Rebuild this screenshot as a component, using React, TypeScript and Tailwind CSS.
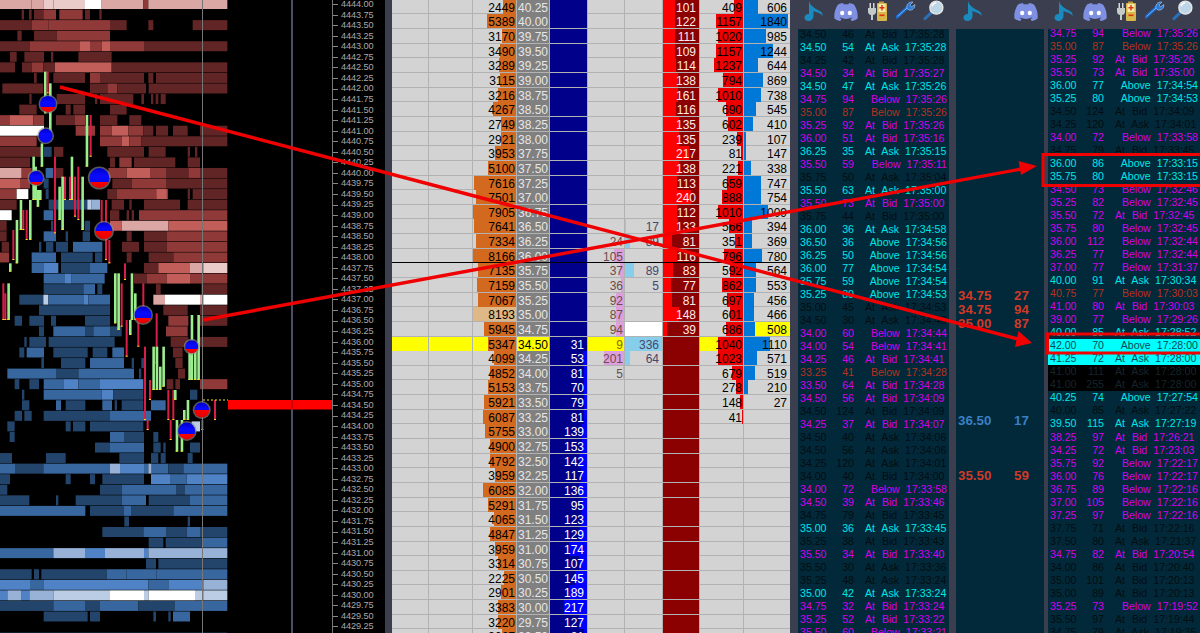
import React from "react";

const COLORS: Record<string, string> = {
  a: "#622525", b: "#8f3a38", c: "#c25e5a", d: "#dba7a5", e: "#ebcaca", w: "#ffffff",
  f: "#23456c", g: "#38669e", h: "#4f83c5", i: "#97b2d6", j: "#bacde5",
};

const HEAT: string[] = [
  "0-95d 95-130d 130-160e 160-255e 255-305w 305-430d 430-445b 445-682d",
  "65-72a 87-95a 102-130a 130-168b 178-248b 255-270a 298-305a",
  "0-95a 95-145b 145-330b 330-380a 445-460a 578-682a",
  "52-65a 102-170a 170-330b",
  "0-90a 90-150b 150-240b 240-270c 270-305b 305-330c 330-432b 432-682a",
  "30-50a 73-132a 153-160a 235-335a",
  "0-45a 66-95a 95-130b 130-165a 165-335c 335-682a",
  "102-110a 160-255a 270-300b 300-432a 445-460a 468-682a",
  "7-130a 270-322a 322-352b 352-438a 446-682a",
  "88-95a 170-255a 285-292a 300-400a 424-432a 453-460a 467-475a 482-497a",
  "58-110a 197-212a 220-255a 330-380a",
  "0-30b 30-100c 100-132b 168-225a 225-255b 300-352a 388-424a",
  "0-132w 227-285b 300-335b 335-385c 385-430b 430-460a 468-504a 519-563a 600-682a",
  "0-110b 300-365b 365-388c 388-424b 424-682a",
  "0-125a 162-190a 322-432a 446-497a 563-570a 585-592a",
  "0-90a 330-345a 358-395b 402-526a 563-600a",
  "0-65d 65-95b 162-190a 325-380b 380-450c 450-500b 500-565a 565-600b 600-682a",
  "0-60c 60-90b 337-395a 395-500b 500-682a",
  "0-50b 50-85w 322-350a 350-504b 470-500c 563-570a 578-682a",
  "0-50a 335-372a 388-395a 432-540a 563-682a",
  "0-35w 330-358a 380-387a 395-402a 417-682b",
  "0-20a 330-365c 365-465d 465-505d 505-570c 570-600c 600-682c",
  "0-20a 380-395a 432-500a 500-682b",
  "5-27a 366-417a 432-500a 500-682b",
  "0-27b 380-395a 446-520a 520-682b",
  "432-475a 475-570c 570-610d 610-682e",
  "402-440a 440-500b 500-570c 570-682b",
  "468-482a 604-682a",
  "460-495d 495-600w 600-610d 610-682w",
  "490-563a 600-682a",
  "505-565b 600-682a",
  "498-563b",
  "512-565a 600-682a",
  "519-548a",
  "526-548a",
  "534-555a",
  "500-520a 526-540a 600-682b",
  "", "", "", "", "", "", "",
  "", "", "", "", "", "", "", "", "", "", "", "", "", "", "", "", "",
];

const BLUE: Record<number, string> = {
  14: "132-155f", 16: "137-160g", 17: "131-146f", 18: "137-146f",
  19: "146-262f 262-275j 275-300i",
  20: "131-160g", 21: "153-160f 254-270f", 22: "131-168g 197-204f 248-270f",
  23: "117-124f 138-160f 168-204f 219-307g",
  24: "95-168g 183-278f 285-307f",
  25: "95-130g 130-175h 183-270f 270-322g",
  26: "131-195g 195-215h 215-314g",
  27: "131-250f 250-285g 292-307f",
  28: "58-130f 130-145j 145-250g 250-265h 265-330g",
  29: "117-330f",
  30: "44-66f 88-132f 153-168f 255-330f",
  31: "117-132f 160-255g 255-280f 280-330g 330-365f",
  32: "73-80f 88-138f 146-344f",
  33: "58-73f 80-132g 160-263f 278-322f 337-372g",
  34: "124-132f 183-256f 270-372g 395-402f 424-432f",
  35: "22-170g 170-235f 235-402g 417-424f",
  36: "44-58f 88-117f 131-190g 190-235h 235-300g 300-360h 360-430h",
  37: "66-73f 131-305g 305-340h 340-430f 570-592f",
  38: "66-88f 168-183g 197-256f 307-336g 344-351f 365-430f 453-497g",
  39: "44-66f 73-95f 131-330f 330-453g",
  40: "22-44f 197-212f 219-256f 270-330f 330-430f 575-600j",
  41: "29-44f 330-372g 372-432f 460-475f",
  42: "285-330f 330-432g 460-482f 490-497f 570-600f",
  43: "0-36f 138-197f 358-432f 453-475f 482-497f 563-578f",
  44: "0-45g 45-130f 130-330g 330-360i 360-432h 432-445g 445-455i 455-505g 505-550f 550-682g",
  45: "0-30f 197-212f 270-285f 307-432f 453-510h 510-560g 560-682h",
  46: "0-22f 300-365f 365-530g 530-555f 555-682g",
  47: "0-88f 168-175f 227-365f 365-438g 446-570f 570-682g",
  48: "0-256g 270-372f 372-395g 395-520f 520-682g",
  49: "373-387f 563-570f",
  50: "307-430f 430-500g 500-560f 560-600g 600-682f",
  51: "446-490f 497-605f 605-682g",
  52: "0-160g 160-255i 255-315h 315-432i 432-445h 445-570i 570-682i",
  53: "438-468f 475-682f",
  54: "0-95f 102-117f 124-320f 320-380g 380-470g 470-682g",
  55: "0-90h 90-130g 130-445h 445-505g 505-610h 610-682i",
  56: "0-22h 22-65i 65-88h 88-160i 160-330j 330-432w 432-446j 446-585w 585-610j 610-682j",
  57: "0-160f 160-255g 255-300f 300-415g 415-525f 525-682g",
  58: "131-263f 270-300f 460-468f 505-512f 519-570g",
  60: "0-682f",
};

const G = "#9ced8e", R = "#d81e46";
const CANDLES: [number, number, number, string][] = [
  [135, 215, 340, G], [150, 250, 400, G], [143, 215, 280, R], [125, 430, 500, G], [100, 470, 600, G], [106, 500, 600, G],
  [260, 345, 500, G], [272, 345, 470, R], [215, 470, 600, G], [187, 530, 690, G], [165, 470, 700, R], [178, 560, 660, G],
  [195, 530, 600, R], [210, 530, 600, R], [225, 530, 650, R], [247, 530, 690, G], [235, 500, 660, R],
  [62, 600, 690, G], [70, 630, 690, R], [50, 660, 790, G], [40, 690, 780, R], [30, 790, 815, G], [25, 850, 960, G],
  [10, 850, 960, R], [16, 880, 960, R], [80, 630, 720, R], [90, 600, 720, G], [113, 570, 620, G], [120, 570, 600, G], [305, 600, 700, R],
  [318, 600, 780, R], [328, 720, 790, R], [345, 820, 970, G], [355, 820, 990, G], [365, 850, 980, R],
  [375, 790, 840, R], [395, 820, 960, G], [405, 880, 960, G], [430, 850, 960, R], [470, 940, 1090, R],
  [575, 945, 1140, G], [595, 945, 1140, G],
  [380, 960, 1070, R], [390, 960, 1005, G], [415, 960, 1040, R], [435, 1040, 1260, R], [460, 1040, 1170, G],
  [470, 1040, 1170, G], [490, 1040, 1160, G], [480, 1100, 1170, G], [450, 1140, 1200, R], [505, 1170, 1260, R],
  [520, 1170, 1260, R], [525, 1170, 1200, G], [563, 1200, 1260, G], [552, 1230, 1260, G], [512, 1260, 1320, R],
  [530, 1260, 1355, G], [545, 1260, 1355, G], [568, 1040, 1140, G], [585, 1040, 1140, G], [645, 1200, 1260, R],
  [443, 1260, 1290, R], [607, 1260, 1290, R],
];

const SPHERES: [number, number, number, string][] = [
  [48, 104, 8, "url(#s1)"], [45.6, 135.7, 7, "url(#s3)"], [36, 178, 7, "url(#s2)"], [99.3, 178, 10, "url(#s1)"],
  [104, 230.7, 8.5, "url(#s0)"], [143, 315, 8.5, "url(#s1)"], [191.7, 346.7, 6.5, "url(#s1)"],
  [201.7, 410, 7.5, "url(#s0)"], [186.7, 431, 8.5, "url(#s1)"],
];

const parseSegs = (s: string) =>
  s.split(" ").filter(Boolean).map((t) => {
    const m = t.match(/^(\d+)-(\d+)([a-z])$/)!;
    return { x: +m[1] / 3, w: (+m[2] - +m[1]) / 3, fill: COLORS[m[3]] };
  });

function Heatmap() {
  const P = 10.56;
  return (
    <svg width={332} height={633} className="shrink-0 block">
      <defs>
        {[["s0", 0.5], ["s1", 0.68], ["s2", 0.82], ["s3", 1.1]].map(([id, f]) => (
          <linearGradient key={id as string} id={id as string} x1="0" y1="0" x2="0" y2="1">
            <stop offset="0" stopColor="#0000c8" />
            <stop offset="0.4" stopColor="#0a0aff" />
            <stop offset={f as number} stopColor="#0808f0" />
            <stop offset={f as number} stopColor="#ff0000" />
            <stop offset="1" stopColor="#e00000" />
          </linearGradient>
        ))}
      </defs>
      {[...HEAT, ""].map((row, i) =>
        parseSegs(row + " " + (BLUE[i] || "")).map((s, j) => (
          <rect key={`${i}-${j}`} x={s.x} y={4 + i * P - 5} width={s.w} height={10} fill={s.fill} />
        ))
      )}
      {CANDLES.map(([x, y1, y2, c], i) => (
        <g key={i}>
          <rect x={x / 3 - 1} y={y1 / 3} width={c === G ? 2.6 : 2} height={(y2 - y1) / 3} fill={c} />
          <rect x={x / 3 - 1} y={y2 / 3 - 1} width={2} height={1} fill="#f5e21a" />
        </g>
      ))}
      <rect x={202} y={0} width={1} height={633} fill="#767676" />
      <rect x={291} y={0} width={2} height={633} fill="#4a4f68" />
      <line x1={203} y1={400} x2={228} y2={400} stroke="#f5e21a" strokeWidth={1} strokeDasharray="2 2" />
      <rect x={228} y={400} width={104} height={9.5} fill="#ff0000" />
      <rect x={291} y={400} width={2} height={9.5} fill="#d00000" />
      {SPHERES.map(([x, y, r, f], i) => (
        <g key={i}>
          <circle cx={x} cy={y} r={r + 1.5} fill="#8a8a8a" opacity={0.65} />
          <circle cx={x} cy={y} r={r} fill={f} />
        </g>
      ))}
    </svg>
  );
}

function Axis() {
  const rows = Array.from({ length: 60 }, (_, i) => (4444 - i * 0.25).toFixed(2));
  return (
    <div className="w-[52px] shrink-0 h-[633px] overflow-hidden border-l border-[#777]">
      <div className="-mt-[0.6px]">
        {rows.map((p) => (
          <div key={p} className="h-[10.56px] flex items-center">
            <span className="w-[5px] h-px bg-[#888] shrink-0" />
            <span className="ml-[3px] text-[9.2px] leading-none text-[#a9a9a9] tracking-[-0.1px]">{p}</span>
          </div>
        ))}
      </div>
    </div>
  );
}

const D: [string, string, number, string, number, string, number, string, number, string, number, string, number, string, number][] = [
  ["40.25","2449",13,"",0,"",0,"",0,"101",24,"409",9,"606",14],
  ["40.00","5389",29,"",0,"",0,"",0,"122",24,"1157",27,"1840",44],
  ["39.75","3170",14,"",0,"",0,"",0,"111",24,"1020",25,"985",22],
  ["39.50","3490",16,"",0,"",0,"",0,"109",24,"1157",27,"1244",29],
  ["39.25","3289",17,"",0,"",0,"",0,"114",23,"1237",29,"644",14],
  ["39.00","3115",16,"",0,"",0,"",0,"138",21,"794",20,"869",19],
  ["38.75","3216",18,"",0,"",0,"",0,"161",21,"1010",25,"738",17],
  ["38.50","4267",23,"",0,"",0,"",0,"116",23,"690",17,"545",12],
  ["38.25","2749",15,"",0,"",0,"",0,"135",20,"602",15,"410",9],
  ["38.00","2921",15,"",0,"",0,"",0,"135",20,"239",6,"107",2],
  ["37.75","3953",21,"",0,"",0,"",0,"217",10,"81",2,"147",2],
  ["37.50","5100",28,"",0,"",0,"",0,"138",20,"221",5,"338",7],
  ["37.25","7616",42,"",0,"",0,"",0,"113",22,"659",16,"747",17],
  ["37.00","7501",40,"",0,"",0,"",0,"240",8,"888",21,"754",17],
  ["36.75","7905",43,"",0,"",0,"",0,"112",22,"1010",25,"1009",24],
  ["36.50","7641",42,"",0,"",0,"17",1,"133",21,"566",14,"394",8],
  ["36.25","7334",40,"",0,"24",0,"89",5,"81",27,"351",8,"369",8],
  ["36.00","8166",43,"",0,"105",10,"",0,"116",22,"796",19,"780",18],
  ["35.75","7135",38,"",0,"37",4,"89",9,"83",26,"592",13,"564",12],
  ["35.50","7159",39,"",0,"36",3,"5",0,"77",28,"862",21,"553",12],
  ["35.25","7067",38,"",0,"92",8,"",0,"81",27,"697",16,"456",10],
  ["35.00","8193",43,"",0,"87",8,"",0,"148",20,"601",13,"466",10],
  ["34.75","5945",32,"",0,"94",8,"",0,"39",32,"686",17,"508",11],
  ["34.50","5347",28,"31",0,"9",0,"336",38,"",37,"1040",25,"1110",26],
  ["34.25","4099",22,"53",4,"201",20,"64",5,"",37,"1023",25,"571",13],
  ["34.00","4852",26,"81",3,"5",1,"",0,"",37,"679",11,"519",11],
  ["33.75","5153",28,"70",3,"",0,"",0,"",37,"278",7,"210",4],
  ["33.50","5921",32,"79",3,"",0,"",0,"",37,"148",3,"27",0],
  ["33.25","6087",33,"81",3,"",0,"",0,"",37,"41",1,"",0],
  ["33.00","5755",31,"139",5,"",0,"",0,"",37,"",0,"",0],
  ["32.75","4900",26,"153",5,"",0,"",0,"",37,"",0,"",0],
  ["32.50","4792",26,"142",8,"",0,"",0,"",37,"",0,"",0],
  ["32.25","3959",21,"117",6,"",0,"",0,"",37,"",0,"",0],
  ["32.00","6085",33,"136",8,"",0,"",0,"",37,"",0,"",0],
  ["31.75","5291",28,"95",5,"",0,"",0,"",37,"",0,"",0],
  ["31.50","4065",22,"123",6,"",0,"",0,"",37,"",0,"",0],
  ["31.25","4847",26,"129",7,"",0,"",0,"",37,"",0,"",0],
  ["31.00","3959",21,"174",18,"",0,"",0,"",37,"",0,"",0],
  ["30.75","3314",18,"107",8,"",0,"",0,"",37,"",0,"",0],
  ["30.50","2225",12,"145",12,"",0,"",0,"",37,"",0,"",0],
  ["30.25","2901",15,"189",18,"",0,"",0,"",37,"",0,"",0],
  ["30.00","3383",18,"217",23,"",0,"",0,"",37,"",0,"",0],
  ["29.75","3220",18,"127",8,"",0,"",0,"",37,"",0,"",0],
  ["29.50","3067",14,"81",3,"",0,"",0,"",37,"",0,"",0],
];

const cell = "h-full border-r border-[#b2b2b2] flex items-center justify-end pr-[1px] pt-[2px] bg-no-repeat bg-clip-padding";

function LadderRow({ r }: { r: (typeof D)[number] }) {
  const [price, vol, volW, navy, navyW, bid, bidW, ask, askW, c7, dark, c8, c8W, c9, c9W] = r;
  const last = price === "34.50";
  const cur = price === "34.75";
  const tan = price === "35.00";
  const yellowRow = last ? "bg-[#ffff00]" : "";
  return (
    <div className="grid grid-cols-[37px_44px_44px_33px_38px_37px_38px_37px_44px_46px] h-[14.65px] border-b border-[#b2b2b2] text-[12px] leading-none text-black box-border">
      <div className={`${cell} ${yellowRow}`} />
      <div className={`${cell} ${yellowRow}`} />
      <div
        className={`${cell} bg-right ${yellowRow} ${tan ? "bg-[linear-gradient(#deb887,#deb887)]" : "bg-[linear-gradient(#d2691e,#d2691e)]"}`}
        style={{ backgroundSize: `${volW}px 100%` }}
      >
        {vol}
      </div>
      <div className={`${cell} ${last ? "bg-[#ffff00] text-black" : "bg-[#808080] text-[#e6e6e6]"}`}>{price}</div>
      <div
        className={`${cell} pr-[3px] bg-right bg-[#00008b] text-white bg-[linear-gradient(#0000ff,#0000ff)]`}
        style={{ backgroundSize: `${navyW}px 100%` }}
      >
        {navy}
      </div>
      <div
        className={`${cell} bg-right text-[#6b4a4a] bg-[linear-gradient(#dda0dd,#dda0dd)] ${last ? "bg-[#ffff00] !text-[#8a6a00]" : ""}`}
        style={{ backgroundSize: `${bidW}px 100%` }}
      >
        {bid}
      </div>
      <div
        className={`${cell} pr-[3px] bg-left text-[#45456e] bg-[linear-gradient(#87ceeb,#87ceeb)] ${cur ? "bg-white" : ""}`}
        style={{ backgroundSize: `${askW}px 100%` }}
      >
        {ask}
      </div>
      <div
        className={`${cell} pr-[3px] bg-right bg-[#ff0000] text-[#ffe9e9] bg-[linear-gradient(#8b0000,#8b0000)]`}
        style={{ backgroundSize: `${dark}px 100%` }}
      >
        {c7}
      </div>
      <div
        className={`${cell} bg-right bg-[linear-gradient(#ee0000,#ee0000)] ${yellowRow}`}
        style={{ backgroundSize: `${c8W}px 100%` }}
      >
        {c8}
      </div>
      <div
        className={`h-full flex items-center justify-end pr-[3px] pt-[2px] bg-no-repeat bg-left bg-clip-padding bg-[linear-gradient(#0078d7,#0078d7)] ${cur ? "bg-[#ffff00]" : ""}`}
        style={{ backgroundSize: `${c9W}px 100%` }}
      >
        {c9}
      </div>
    </div>
  );
}

function Ladder() {
  return (
    <div className="w-[398px] shrink-0 h-[633px] overflow-hidden bg-[#d3d3d3] font-['Liberation_Sans',Arial,sans-serif]">
      <div className="-mt-[0.2px]">
        {D.map((r) => (
          <React.Fragment key={r[0]}>
            <LadderRow r={r} />
            {r[0] === "36.00" && <div className="relative z-10 h-px -mt-[1px] bg-black" />}
          </React.Fragment>
        ))}
      </div>
    </div>
  );
}

const P1 = `k 34.50 46 At Bid 17:35:28
c 34.50 54 At Ask 17:35:28
k 34.25 42 At Bid 17:35:28
m 34.50 34 At Bid 17:35:27
c 34.50 47 At Ask 17:35:26
m 34.75 94 Below 17:35:26
r 35.00 87 Below 17:35:26
m 35.25 92 At Bid 17:35:26
m 36.00 51 At Bid 17:35:16
c 36.25 35 At Ask 17:35:15
m 35.50 59 Below 17:35:11
k 35.75 50 At Ask 17:35:04
c 35.50 63 At Ask 17:35:00
m 35.50 73 At Bid 17:35:00
k 35.75 44 At Bid 17:35:00
c 36.00 36 At Ask 17:34:58
c 36.50 36 Above 17:34:56
c 36.25 50 Above 17:34:56
c 36.00 77 Above 17:34:54
c 35.75 59 Above 17:34:54
c 35.25 80 Above 17:34:53
k 35.00 45 At Ask 17:34:53
k 34.50 30 At Ask 17:34:46
m 34.00 60 Below 17:34:44
m 34.00 54 Below 17:34:41
m 34.25 46 At Bid 17:34:41
r 33.25 41 Below 17:34:28
m 33.50 64 At Bid 17:34:28
m 34.50 56 At Bid 17:34:09
k 34.50 124 At Bid 17:34:09
m 34.25 37 At Bid 17:34:07
k 34.50 40 At Ask 17:34:06
k 34.50 56 At Ask 17:34:06
k 34.25 120 At Ask 17:34:01
k 34.00 40 At Bid 17:34:00
m 34.00 72 Below 17:33:58
m 34.50 39 At Bid 17:33:46
k 34.75 79 At Bid 17:33:45
c 35.00 36 At Ask 17:33:45
k 35.25 38 At Bid 17:33:43
m 35.50 34 At Bid 17:33:40
k 35.50 30 At Ask 17:33:36
k 35.25 48 At Ask 17:33:24
c 35.00 42 At Ask 17:33:24
m 34.75 32 At Bid 17:33:24
m 35.25 52 At Bid 17:33:22
m 35.50 60 Below 17:33:21`;

const P3 = `m 34.75 94 Below 17:35:26
r 35.00 87 Below 17:35:26
m 35.25 92 At Bid 17:35:26
m 35.50 73 At Bid 17:35:00
c 36.00 77 Above 17:34:54
c 35.25 80 Above 17:34:53
k 34.50 124 At Bid 17:34:09
k 34.25 120 At Ask 17:34:01
m 34.00 72 Below 17:33:58
k 34.75 79 At Bid 17:33:45
c 36.00 86 Above 17:33:15
c 35.75 80 Above 17:33:15
m 34.50 73 Below 17:32:46
m 35.25 82 Below 17:32:45
m 35.50 72 At Bid 17:32:45
m 35.75 80 Below 17:32:45
m 36.00 112 Below 17:32:44
m 36.25 77 Below 17:32:44
m 37.00 77 Below 17:31:37
c 40.00 91 At Ask 17:30:34
r 40.75 77 Below 17:30:03
m 41.00 80 At Bid 17:30:03
m 39.00 77 Below 17:29:26
c 40.00 85 At Ask 17:28:52
h 42.00 70 Above 17:28:00
h 41.25 72 At Ask 17:28:00
b 41.00 111 At Ask 17:28:00
b 41.00 255 At Ask 17:28:00
c 40.25 74 Above 17:27:54
k 40.00 85 At Ask 17:27:22
c 39.50 115 At Ask 17:27:19
m 38.25 97 At Bid 17:26:21
m 34.25 72 At Bid 17:23:03
m 35.75 92 Below 17:22:17
m 36.00 76 Below 17:22:17
m 36.75 89 Below 17:22:16
m 37.00 105 Below 17:22:16
m 37.25 97 Below 17:22:16
k 37.75 71 At Bid 17:22:16
k 37.50 80 At Ask 17:21:37
m 34.75 82 At Bid 17:20:54
k 34.00 86 At Bid 17:20:40
k 35.00 101 At Bid 17:20:13
k 35.00 89 At Bid 17:20:13
m 35.25 73 Below 17:19:52
k 35.50 97 At Bid 17:19:44
k 34.75 79 At Ask 17:19:35`;

const TONE: Record<string, string> = {
  k: "text-[#030d12]",
  c: "text-[#00e6e6]",
  m: "text-[#d400e6]",
  r: "text-[#b8301f]",
  h: "text-[#0a4a55] bg-[#00ffff]",
  b: "text-[#16242a] bg-black",
};

function Tape({ data }: { data: string }) {
  const rows = data.split("\n").map((l) => {
    const p = l.split(" ");
    return { tone: p[0], price: p[1], size: p[2], cond: p.slice(3, p.length - 1).join(" "), time: p[p.length - 1] };
  });
  return (
    <div className="font-['Liberation_Sans',Arial,sans-serif] text-[10.6px] leading-none">
      {rows.map((r, i) => (
        <div key={i} className={`h-[13.02px] flex items-center pl-[2px] pr-[2px] ${TONE[r.tone]}`}>
          <span className="w-[34px] shrink-0">{r.price}</span>
          <span className="w-[20px] shrink-0 text-right">{r.size}</span>
          <span
            className={`flex-1 flex gap-[6px] whitespace-nowrap [word-spacing:4px] pl-[11px] ${r.cond.startsWith("At") ? "justify-start" : "justify-end"}`}
          >
            <span>{r.cond}</span>
            <span>{r.time}</span>
          </span>
        </div>
      ))}
    </div>
  );
}

const Note = () => (
  <svg width="20" height="22" viewBox="0 0 20 22" className="shrink-0">
    <path d="M5 1 C6 5 9 7 12 9 C16 11 19 12 18.5 16 C17 13 13 12.5 9.5 11 L9.5 16 C9.5 19 7 21 4.5 21 C2 21 0.5 19.5 0.5 17.5 C0.5 15 3 13.5 5 14 Z" fill="#1b8bbf" />
  </svg>
);
const Discord = () => (
  <svg width="24" height="18" viewBox="0 0 24 18" className="shrink-0">
    <path d="M20 1.6C18.4.9 16.8.4 15 .1l-.7 1.4c-1.6-.3-3.1-.3-4.6 0L9 .1C7.2.4 5.600.9 4 1.600 .8 6.300 0 10.900.4 15.400c2 1.500 4 2.300 5.900 2.600l1.300-2c-.7-.3-1.400-.6-2-1l.5-.4c3.800 1.800 8 1.800 11.800 0l.5.400c-.6.4-1.300.7-2 1l1.300 2c1.900-.3 3.900-1.100 5.900-2.600.5-5.200-.9-9.800-3.600-13.800Z" fill="#7f90e2" />
    <ellipse cx="8.200" cy="10" rx="2.100" ry="2.300" fill="#fff" />
    <ellipse cx="15.800" cy="10" rx="2.100" ry="2.300" fill="#fff" />
  </svg>
);
const Plug = () => (
  <svg width="20" height="20" viewBox="0 0 20 20" className="shrink-0">
    <rect x="1.500" y="2" width="1.500" height="6" fill="#d8d8d8" />
    <rect x="5" y="2" width="1.500" height="6" fill="#d8d8d8" />
    <path d="M0 7 H8 V11 C8 13 6 14 5 14 V19 H3 V14 C2 14 0 13 0 11 Z" fill="#c4cac8" />
    <rect x="11" y="0.500" width="5" height="2" fill="#b89a40" />
    <rect x="9" y="2" width="10" height="18" rx="1" fill="#d6b64a" />
    <rect x="10.500" y="3" width="7" height="8" fill="#f3e9a8" />
    <path d="M13.300 4 H14.700 V6 H16.500 V7.400 H14.700 V9.400 H13.300 V7.400 H11.500 V6 H13.300 Z" fill="#e03010" />
    <rect x="11.500" y="13.500" width="5" height="1.600" fill="#e03010" />
  </svg>
);
const Wrench = () => (
  <svg width="20" height="19" viewBox="0 0 20 19" className="shrink-0">
    <path d="M1 16 L12 6" stroke="#1a66c8" strokeWidth="3.600" strokeLinecap="round" />
    <path d="M1.500 15.500 L11 7" stroke="#7fb6ee" strokeWidth="1" />
    <path d="M11 7.500 C10 4 12.500 0.500 17 1 L14 4 L15.500 6 L18.800 3.500 C19.300 7.500 15.500 10.500 12 8.500 Z" fill="#2a7ad8" stroke="#cfe4f8" strokeWidth="0.500" />
  </svg>
);
const Lens = () => (
  <svg width="21" height="21" viewBox="0 0 22 21" className="shrink-0">
    <path d="M2 19 L9 12.500" stroke="#2b6fb5" strokeWidth="3.200" strokeLinecap="round" />
    <circle cx="14" cy="7.500" r="6.800" fill="#bcd6e8" stroke="#e6e6e6" strokeWidth="1.500" />
    <path d="M9.500 6 A5 5 0 0 1 14 2.500" stroke="#fff" strokeWidth="1.500" fill="none" />
  </svg>
);

function Panel({ w, head, children }: { w: string; head: React.ReactNode; children: React.ReactNode }) {
  return (
    <div className={`${w} shrink-0 h-[633px] flex flex-col overflow-hidden`}>
      <div className="h-[29px] shrink-0 bg-[#3a3e4e] flex items-start">{head}</div>
      <div className="flex-1 bg-[#02293a] overflow-hidden">{children}</div>
    </div>
  );
}

const Red = ({ p, s, blue }: { p?: string; s?: string; blue?: boolean }) => (
  <div className={`h-[13.85px] flex items-center font-bold text-[13.3px] leading-none pl-[2px] ${blue ? "text-[#3a80c4]" : "text-[#cf3a28]"}`}>
    <span className="w-[56px]">{p}</span>
    <span>{s}</span>
  </div>
);

function Overlay() {
  return (
    <svg width={1200} height={633} className="absolute left-0 top-0 z-20 pointer-events-none">
      <path d="M60 87 L1018 339" stroke="#f00000" strokeWidth="3.400" fill="none" />
      <path d="M1032 343 L1015 347 L1018.500 331 Z" fill="#f00000" />
      <path d="M203 320 L1024 168.500" stroke="#f00000" strokeWidth="3.400" fill="none" />
      <path d="M1037 166 L1021 175 L1018.500 161 Z" fill="#f00000" />
      <rect x={1043} y={154.500} width={160} height={31} fill="none" stroke="#f00000" strokeWidth="3" />
      <rect x={1047.500} y={334} width={156} height={19} fill="none" stroke="#f00000" strokeWidth="3" />
    </svg>
  );
}

export default function App() {
  return (
    <div className="relative w-[1200px] h-[633px] overflow-hidden flex bg-black font-['Liberation_Sans',Arial,sans-serif]">
      <div className="w-[385px] shrink-0 flex bg-black">
        <Heatmap />
        <Axis />
      </div>
      <div className="w-[7px] shrink-0 bg-[#3a3e4e]" />
      <Ladder />
      <div className="w-[8px] shrink-0 bg-[#3a3e4e]" />
      <Panel
        w="w-[151px]"
        head={
          <div className="flex items-start pl-[6px]">
            <Note />
            <span className="mt-[3px] ml-[10px]"><Discord /></span>
            <span className="mt-[1px] ml-[10px]"><Plug /></span>
            <span className="mt-[1px] ml-[8px]"><Wrench /></span>
            <span className="ml-[7px]"><Lens /></span>
          </div>
        }
      >
        <div className="-mt-[1.500px]">
          <Tape data={P1} />
        </div>
      </Panel>
      <div className="w-[7px] shrink-0 bg-[#3a3e4e]" />
      <Panel
        w="w-[88px]"
        head={
          <div className="flex items-start gap-[31px] pl-[7px]">
            <Note />
            <span className="mt-[3px]"><Discord /></span>
          </div>
        }
      >
        <div className="pt-[260px]">
          <Red p="34.75" s="27" />
          <Red p="34.75" s="94" />
          <Red p="35.00" s="87" />
          {[1, 2, 3, 4, 5, 6].map((i) => (
            <Red key={i} />
          ))}
          <Red p="36.50" s="17" blue />
          {[1, 2, 3].map((i) => (
            <Red key={i} />
          ))}
          <Red p="35.50" s="59" />
        </div>
      </Panel>
      <div className="w-[4px] shrink-0 bg-[#3a3e4e]" />
      <Panel
        w="w-[152px]"
        head={
          <div className="flex items-start pl-[6px]">
            <Note />
            <span className="mt-[3px] ml-[9px]"><Discord /></span>
            <span className="mt-[1px] ml-[10px]"><Plug /></span>
            <span className="mt-[1px] ml-[8px]"><Wrench /></span>
            <span className="ml-[7px]"><Lens /></span>
          </div>
        }
      >
        <div className="-mt-[2.200px]">
          <Tape data={P3} />
        </div>
      </Panel>
      <Overlay />
    </div>
  );
}
